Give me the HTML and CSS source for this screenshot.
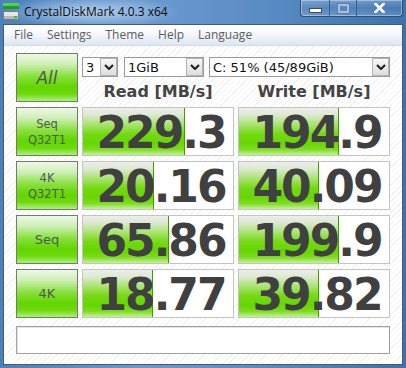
FILE: index.html
```html
<!DOCTYPE html>
<html lang="en">
<head>
    <meta charset="UTF-8">
    <title>CrystalDiskMark 4.0.3 x64</title>
    <link rel="stylesheet" href="styles.css">
</head>
<body>
    <div class="window">
        <div class="titlebar">
            <svg class="app-icon" width="16" height="17" viewBox="0 0 16 17">
                <rect x="0" y="0" width="16" height="3" fill="#4fd44f"/>
                <rect x="0" y="3" width="16" height="3" fill="#1f9a2a"/>
                <rect x="0.5" y="8.5" width="15" height="8" fill="#e6e6e6" stroke="#7d7d7d"/>
                <rect x="1" y="13" width="14" height="3" fill="#b9b9b9"/>
                <rect x="11" y="13" width="3" height="2" fill="#27c927"/>
            </svg>
            <span class="title">CrystalDiskMark 4.0.3 x64</span>
            <div class="controls">
                <span class="ctl ctl-min"><i></i></span>
                <span class="ctl ctl-max"><i></i></span>
                <span class="ctl ctl-close">
                    <svg width="11" height="10" viewBox="0 0 11 10">
                        <path d="M1.5 1 L9.5 9 M9.5 1 L1.5 9" stroke="#fff" stroke-width="2.6" stroke-linecap="square"/>
                    </svg>
                </span>
            </div>
        </div>

        <div class="client">
            <ul class="menubar">
                <li>File</li>
                <li>Settings</li>
                <li>Theme</li>
                <li>Help</li>
                <li>Language</li>
            </ul>

            <div class="main">
                <div class="side-btn btn-all">All</div>
                <div class="top-right">
                    <div class="selects">
                        <div class="select sel-count"><span>3</span><b class="arrow"><svg width="10" height="6" viewBox="0 0 10 6"><path d="M1 1 L5 5 L9 1" fill="none" stroke="#1a1a2a" stroke-width="2"/></svg></b></div>
                        <div class="select sel-size"><span>1GiB</span><b class="arrow"><svg width="10" height="6" viewBox="0 0 10 6"><path d="M1 1 L5 5 L9 1" fill="none" stroke="#1a1a2a" stroke-width="2"/></svg></b></div>
                        <div class="select sel-drive"><span>C: 51% (45/89GiB)</span><b class="arrow"><svg width="10" height="6" viewBox="0 0 10 6"><path d="M1 1 L5 5 L9 1" fill="none" stroke="#1a1a2a" stroke-width="2"/></svg></b></div>
                    </div>
                    <div class="heads">
                        <div class="head">Read [MB/s]</div>
                        <div class="head">Write [MB/s]</div>
                    </div>
                </div>

                <div class="side-btn two-line">Seq<br>Q32T1</div>
                <div class="cell"><div class="bar" style="width: 101px"></div><span class="num">229.3</span></div>
                <div class="cell"><div class="bar" style="width: 99px"></div><span class="num">194.9</span></div>

                <div class="side-btn two-line">4K<br>Q32T1</div>
                <div class="cell"><div class="bar" style="width: 70px"></div><span class="num">20.16</span></div>
                <div class="cell"><div class="bar" style="width: 79px"></div><span class="num">40.09</span></div>

                <div class="side-btn one-line">Seq</div>
                <div class="cell"><div class="bar" style="width: 85px"></div><span class="num">65.86</span></div>
                <div class="cell"><div class="bar" style="width: 99px"></div><span class="num">199.9</span></div>

                <div class="side-btn one-line">4K</div>
                <div class="cell"><div class="bar" style="width: 69px"></div><span class="num">18.77</span></div>
                <div class="cell"><div class="bar" style="width: 79px"></div><span class="num">39.82</span></div>

                <div class="status"></div>
            </div>
        </div>
    </div>
</body>
</html>
```

FILE: styles.css
```css
html,
body {
    margin: 0;
    padding: 0;
}

body {
    width: 406px;
    height: 368px;
    overflow: hidden;
    font-family: "DejaVu Sans", sans-serif;
}

.window {
    width: 406px;
    height: 368px;
    display: flex;
    flex-direction: column;
    background:
        radial-gradient(ellipse 90px 16px at 90px 12px, rgba(210, 230, 248, 0.75), rgba(210, 230, 248, 0) 100%),
        linear-gradient(to right, #4a80bb 0%, #6a9ad0 35%, #5a8cc4 65%, #3c72ad 100%);
}

/* title bar */
.titlebar {
    height: 24px;
    display: flex;
    align-items: flex-start;
    position: relative;
}

.app-icon {
    margin: 3px 0 0 3px;
}

.title {
    margin: 4px 0 0 5px;
    font-family: "Open Sans", sans-serif;
    font-size: 12px;
    line-height: 16px;
    color: #0b0b0b;
}

.controls {
    position: absolute;
    top: 0;
    right: 3px;
    display: flex;
    height: 16px;
    border: 1px solid #2d4f78;
    border-top: 0;
    border-radius: 0 0 4px 4px;
    overflow: hidden;
    box-shadow: inset 0 0 0 1px rgba(255, 255, 255, 0.35);
}

.ctl {
    display: flex;
    align-items: center;
    justify-content: center;
    background: linear-gradient(to bottom, rgba(255, 255, 255, 0.25), rgba(255, 255, 255, 0.05) 50%, rgba(255, 255, 255, 0.18));
}

.ctl + .ctl {
    border-left: 1px solid #3a5f8c;
}

.ctl-min {
    width: 28px;
}

.ctl-min i {
    display: block;
    width: 11px;
    height: 3px;
    margin-top: 5px;
    background: #fff;
    border: 1px solid #3b4e66;
}

.ctl-max {
    width: 26px;
}

.ctl-max i {
    display: block;
    width: 7px;
    height: 5px;
    border: 2px solid #a9c0dc;
    box-shadow: 0 0 0 1px #5c7ea6;
}

.ctl-close {
    width: 45px;
}

/* client area */
.client {
    flex: 1;
    margin: 0 3px 3px 3px;
    border: 1px solid #4a5a6c;
    background: #fff;
    display: flex;
    flex-direction: column;
}

.menubar {
    list-style: none;
    margin: 0;
    padding: 0 0 0 3px;
    height: 20px;
    display: flex;
    border-bottom: 1px solid #d2dbe8;
    background: linear-gradient(to bottom, #ffffff 0%, #f5f8fc 45%, #dde6f2 100%);
}

.menubar li {
    padding: 0 7px;
    font-family: "Open Sans", sans-serif;
    font-size: 12px;
    line-height: 20px;
    color: #5c5c5c;
}

.main {
    flex: 1;
    padding: 7px 0 0 12px;
    display: grid;
    grid-template-columns: 62px 152px 152px;
    grid-template-rows: 49px 49px 49px 49px 49px 31px;
    column-gap: 4px;
    row-gap: 5px;
    background: repeating-linear-gradient(135deg, #ffffff 0, #ffffff 3px, #f2f2f2 3px, #f2f2f2 4px);
}

.side-btn {
    box-sizing: border-box;
    border: 1px solid #6f7d6f;
    display: flex;
    align-items: center;
    justify-content: center;
    text-align: center;
    color: #4e5a4e;
    background: linear-gradient(to bottom, #eef8e8 0%, #cdefb4 22%, #86e03a 48%, #62d600 70%, #6cd90c 85%, #aef07c 100%);
}

.btn-all {
    font-size: 17px;
    font-style: oblique;
}

.two-line {
    font-size: 11.5px;
    line-height: 16px;
}

.one-line {
    font-size: 13px;
}

.top-right {
    grid-column: 2 / 4;
    display: flex;
    flex-direction: column;
}

.selects {
    margin-top: 4px;
    height: 20px;
    display: flex;
}

.select {
    box-sizing: border-box;
    height: 20px;
    border: 1px solid #9a9a9a;
    background: #fff;
    display: flex;
    align-items: center;
    font-size: 13px;
    color: #111;
}

.select span {
    flex: 1;
    padding-left: 3px;
    white-space: nowrap;
}

.sel-count {
    width: 36px;
}

.sel-size {
    width: 80px;
    margin-left: 6px;
}

.sel-drive {
    width: 181px;
    margin-left: 5px;
}

.arrow {
    box-sizing: border-box;
    width: 17px;
    height: 18px;
    border: 1px solid #b4b4b4;
    background: linear-gradient(to bottom, #f6f6f6, #dedede);
    display: flex;
    align-items: center;
    justify-content: center;
}

.heads {
    margin-top: 5px;
    display: flex;
    gap: 4px;
}

.head {
    width: 152px;
    text-align: center;
    font-weight: bold;
    font-size: 16px;
    line-height: 20px;
    color: #444;
}

.cell {
    position: relative;
    box-sizing: border-box;
    border: 1px solid #c4c4c4;
    background: #fff;
}

.bar {
    position: absolute;
    top: 0;
    bottom: 0;
    left: 0;
    border-right: 1px solid #3e9c00;
    background: linear-gradient(to bottom, #eceeea 0%, #dde9d4 14%, #a6e46a 36%, #74da12 55%, #66d600 75%, #7edc20 88%, #c4f29a 100%);
}

.num {
    position: relative;
    display: block;
    padding: 3px 0 0 6px;
    text-align: center;
    font-weight: bold;
    font-size: 44px;
    line-height: 44px;
    letter-spacing: -2px;
    color: #404040;
}

.status {
    grid-column: 1 / 4;
    margin-top: 3px;
    box-sizing: border-box;
    border: 1px solid #a0a0a0;
    background: #fff;
    box-shadow: inset 1px 1px 0 #e4e4e4;
}
```
